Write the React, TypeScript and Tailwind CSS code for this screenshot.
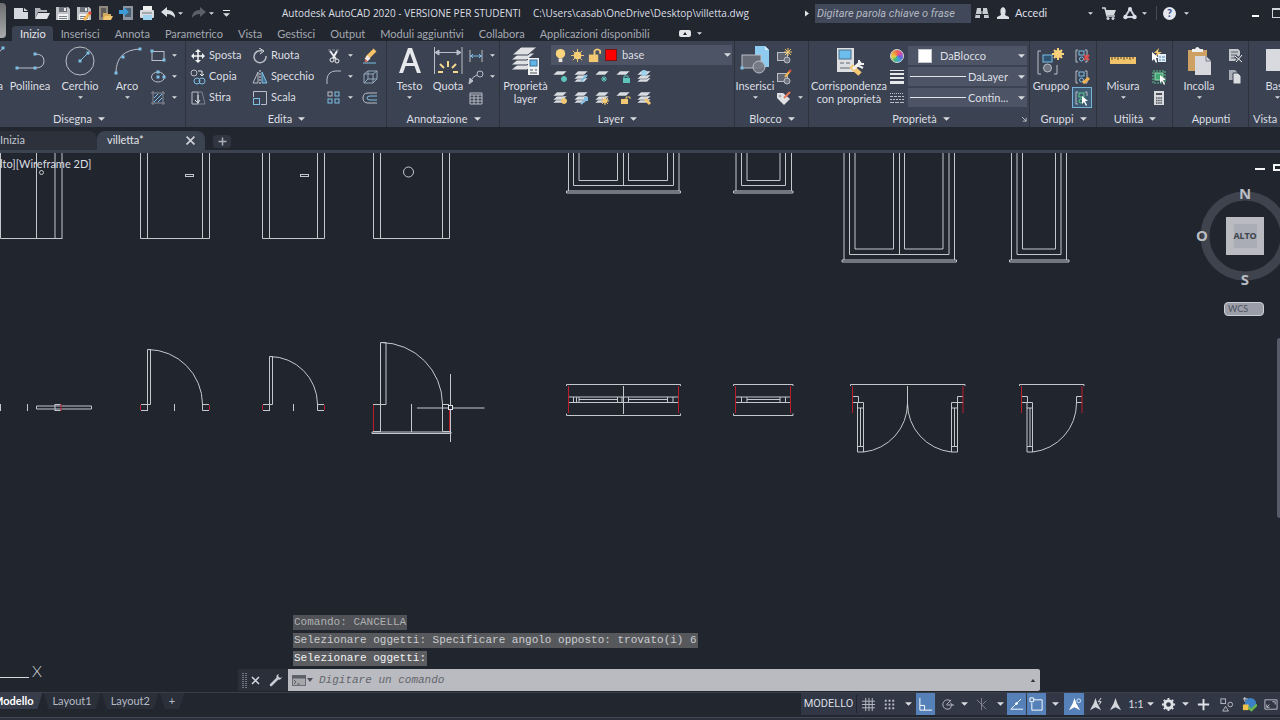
import type { ReactNode } from "react";
import clsx from "clsx";

type IconProps = { size?: string; box?: string; children: ReactNode };

const LINE = "#b9bec8";
const BLUE = "#7fbfe6";
const PAPER = "#d5d8dc";
const GOLD = "#f3c872";
const TEAL = "#5cc4bb";

function Icon({ size = "h-4 w-4", box = "0 0 16 16", children }: IconProps) {
  return (
    <svg viewBox={box} className={clsx("shrink-0", size)} fill="none" stroke={LINE} strokeWidth="1" aria-hidden="true">
      {children}
    </svg>
  );
}

function Caret({ small = false }: { small?: boolean }) {
  return (
    <svg viewBox="0 0 8 4" className={small ? "h-[3px] w-[5px] shrink-0" : "h-1 w-[7px] shrink-0"} aria-hidden="true">
      <path d="M0 0H8L4 4Z" fill="#d9dce1" />
    </svg>
  );
}

/* ---------- quick access icons ---------- */

const floppy = (
  <g stroke="none">
    <path d="M1 2H13L15 4V15H1Z" fill="#bfc2c7" />
    <rect x="4" y="2" width="8" height="5" fill="#6d7179" />
    <rect x="9" y="3" width="2" height="3" fill="#e6e8ea" />
    <rect x="3" y="9" width="10" height="6" fill="#f1f1f1" />
    <path d="M4 11.5H12M4 13.5H12" stroke="#7b7f86" />
  </g>
);

const quickIcons: { name: string; icon: ReactNode }[] = [
  { name: "Nuovo", icon: <path d="M1 3H10V7H15V14H1Z M11 3L15 6H11Z" fill={PAPER} stroke="none" /> },
  {
    name: "Apri",
    icon: (
      <g stroke="none">
        <path d="M1 14V3H6L7 5H13V7H4Z" fill="#aeb2b8" />
        <path d="M4 8H16L13 14H1Z" fill="#dfe1e4" />
      </g>
    ),
  },
  { name: "Salva", icon: floppy },
  {
    name: "Salva con nome",
    icon: (
      <>
        {floppy}
        <path d="M8 15L14 8" stroke="#f0b352" strokeWidth="3" />
        <path d="M13 9L15 7" stroke="#d9483c" strokeWidth="3" />
      </>
    ),
  },
  {
    name: "Apri da Web",
    icon: (
      <g stroke="none">
        <rect x="2" y="1" width="9" height="14" fill="#8f8a80" />
        <rect x="4" y="3" width="5" height="9" fill="#5e5c59" />
        <path d="M6 15V8H10L11 9H14V15Z" fill="#d8ab5c" />
        <path d="M8 11H16L14 15H6Z" fill={GOLD} />
      </g>
    ),
  },
  {
    name: "Salva su Web",
    icon: (
      <g stroke="none">
        <rect x="5" y="1" width="10" height="14" fill="#8f959e" />
        <rect x="7" y="3" width="6" height="9" fill="#4a6075" />
        <path d="M1 5H6V2L11 7L6 11V9H1Z" fill="#3d9ad8" />
      </g>
    ),
  },
  {
    name: "Stampa",
    icon: (
      <g stroke="none">
        <rect x="4" y="1" width="9" height="5" fill="#f0f0f0" />
        <rect x="1" y="5" width="14" height="8" rx="1" fill="#d9dbde" />
        <path d="M3 8H13" stroke="#6d7078" />
        <rect x="4" y="10" width="9" height="5" fill="#9fd2ee" />
      </g>
    ),
  },
];

function QuickAccess() {
  return (
    <div className="flex items-center gap-[5px] pl-[13px]">
      {quickIcons.map((item) => (
        <button key={item.name} aria-label={item.name}>
          <Icon>{item.icon}</Icon>
        </button>
      ))}
      <button aria-label="Annulla">
        <Icon>
          <path d="M1 7L7 2V5Q15 5 15 13Q12 9 7 9V12Z" fill="#dcdfe3" stroke="none" />
        </Icon>
      </button>
      <button aria-label="Elenco annulla" className="-ml-[3px] w-2">
        <Caret small />
      </button>
      <button aria-label="Ripeti">
        <Icon>
          <path d="M15 7L9 2V5Q1 5 1 13Q4 9 9 9V12Z" fill="#5a6069" stroke="none" />
        </Icon>
      </button>
      <button aria-label="Elenco ripeti" className="-ml-[3px] w-2">
        <Caret small />
      </button>
      <button aria-label="Personalizza" className="flex w-2 flex-col items-center gap-[2px]">
        <span className="h-px w-[7px] bg-gray-200" />
        <Caret />
      </button>
    </div>
  );
}

function TitleBar() {
  return (
    <header className="flex h-[26px] shrink-0 items-center bg-[#22262f] text-[11px] text-[#dcdfe4]">
      <QuickAccess />
      <div className="ml-[52px] flex gap-3 whitespace-nowrap font-['Open_Sans',sans-serif] text-[10px]">
        <h1>Autodesk AutoCAD 2020 - VERSIONE PER STUDENTI</h1>
        <span>C:\Users\casab\OneDrive\Desktop\villetta.dwg</span>
      </div>
      <div className="ml-auto flex shrink-0 items-center">
        <svg viewBox="0 0 4 6" className="mr-[6px] h-[7px] w-1" aria-hidden="true">
          <path d="M0 0L4 3L0 6Z" fill="#e5e7eb" />
        </svg>
        <input
          aria-label="Cerca"
          placeholder="Digitare parola chiave o frase"
          className="h-[19px] w-[156px] bg-[#414859] px-[2px] font-[Roboto,sans-serif] italic placeholder:text-[#b3b8c2]"
        />
        <button aria-label="Trova" className="ml-[3px]">
          <Icon>
            <path d="M3 3H7V6H9V3H13L15 13H10V9H6V13H1Z" fill="#c8ccd2" stroke="none" />
            <path d="M2 9.500H6M10 9.500H14M8 3V9" stroke="#22262f" />
          </Icon>
        </button>
        <button className="ml-[5px] flex w-[98px] items-center gap-1">
          <Icon>
            <path d="M2 14V12L6 10Q4 3 8 2Q12 3 10 10L14 12V14Z" fill="#dcdfe3" stroke="none" />
          </Icon>
          Accedi
          <span className="ml-auto">
            <Caret small />
          </span>
        </button>
        <button aria-label="App Store" className="ml-2">
          <Icon>
            <path d="M1 3H4L6 11H14" stroke="#d5d8dd" strokeWidth="1.500" />
            <path d="M4 5H15L13 10H6Z" fill="#d5d8dd" stroke="none" />
            <circle cx="7" cy="13.500" r="1.200" fill="#d5d8dd" />
            <circle cx="12" cy="13.500" r="1.200" fill="#d5d8dd" />
          </Icon>
        </button>
        <button aria-label="Autodesk App" className="ml-[5px] flex items-center gap-1">
          <Icon>
            <path d="M8 4L3 12H13Z" stroke="#c7ccda" strokeWidth="2" />
            <g fill="#dde1ec" stroke="none">
              <circle cx="8" cy="4" r="2" />
              <circle cx="3.500" cy="12" r="2.200" />
              <circle cx="12.500" cy="12" r="2.200" />
            </g>
          </Icon>
          <Caret small />
        </button>
        <span className="ml-[9px] h-[14px] w-px bg-[#454b57]" />
        <button aria-label="Guida" className="ml-[6px] flex items-center gap-2">
          <span className="flex h-[13px] w-[13px] items-center justify-center rounded-full bg-[#e6e8ef] text-[11px] font-bold text-[#2d4a8c]">
            ?
          </span>
          <Caret small />
        </button>
        <button aria-label="Riduci a icona" className="ml-[63px] h-[8px] w-[7px] border-b-2 border-white" />
        <button aria-label="Ingrandisci" className="-mr-1 ml-[13px] h-[10px] w-3 border border-t-2 border-gray-300" />
      </div>
    </header>
  );
}

/* ---------- ribbon ---------- */

const ribbonTabs = [
  "Inizio",
  "Inserisci",
  "Annota",
  "Parametrico",
  "Vista",
  "Gestisci",
  "Output",
  "Moduli aggiuntivi",
  "Collabora",
  "Applicazioni disponibili",
];

function RibbonTabs() {
  return (
    <nav className="flex h-[15px] shrink-0 items-stretch bg-[#22262f] pl-3 text-[11px] leading-[15px] text-[#a4a9b2]">
      {ribbonTabs.map((tab) => (
        <button
          key={tab}
          className={clsx("whitespace-nowrap rounded-t-sm pl-2 pr-[7px]", tab === "Inizio" && "bg-[#3b4251] text-[#e4e7eb]")}
        >
          {tab}
        </button>
      ))}
      <button aria-label="Riduci barra multifunzione" className="ml-[22px] flex items-center gap-[6px]">
        <span className="flex h-[7px] w-3 items-center justify-center rounded-[2px] bg-[#e3e5e8]">
          <svg viewBox="0 0 4 3" className="h-[3px] w-1">
            <path d="M0 3H4L2 0Z" fill="#22262f" />
          </svg>
        </span>
        <Caret small />
      </button>
    </nav>
  );
}

type PanelProps = { title: string; width: string; caret?: boolean; launcher?: boolean; children: ReactNode };

function Panel({ title, width, caret = true, launcher = false, children }: PanelProps) {
  return (
    <section className={clsx("flex shrink-0 flex-col border-r border-[#2d323d]", width)}>
      <div className="flex h-[70px] pt-1">{children}</div>
      <button className="flex h-4 items-center justify-center gap-[6px] pl-px text-[11px] leading-4">
        {title}
        {caret && <Caret />}
        {launcher && (
          <svg viewBox="0 0 6 6" className="-mr-[80px] ml-[66px] h-[5px] w-[5px]" stroke="#c9cdd4">
            <path d="M0 0L5 5M5 1V5H1" fill="none" />
          </svg>
        )}
      </button>
    </section>
  );
}

type LargeProps = { label: string; width: string; caret?: boolean; children: ReactNode };

function LargeTool({ label, width, caret = false, children }: LargeProps) {
  return (
    <button className={clsx("flex shrink-0 flex-col items-center text-[11px] leading-[13px]", width)}>
      <Icon size="h-8 w-8" box="0 0 32 32">
        {children}
      </Icon>
      <span className="mt-[2px] whitespace-pre-line text-center">{label}</span>
      {caret && (
        <span className="mt-1">
          <Caret small />
        </span>
      )}
    </button>
  );
}

type SmallProps = { name: string; icon: ReactNode; caret?: boolean; active?: boolean };

function SmallTool({ name, icon, caret = false, active = false }: SmallProps) {
  return (
    <button
      aria-label={name}
      className={clsx(
        "flex h-[21px] items-center gap-[6px] px-[2px]",
        active && "bg-[#3f5a73] outline outline-1 -outline-offset-1 outline-[#78b4d8]",
      )}
    >
      <Icon>{icon}</Icon>
      {caret && <Caret small />}
    </button>
  );
}

function TextTool({ label, icon }: { label: string; icon: ReactNode }) {
  return (
    <button className="flex h-[21px] items-center gap-[3px] text-[11px]">
      <Icon>{icon}</Icon>
      {label}
    </button>
  );
}

const dot = (x: number, y: number) => <rect x={x - 1} y={y - 1} width="2" height="2" fill={BLUE} stroke={BLUE} />;

function DrawPanel() {
  return (
    <div className="-ml-7 flex shrink-0">
      <Panel title="Disegna" width="w-[214px]">
        <LargeTool label="Linea" width="w-9">
          <path d="M6 28L29 3" />
          {dot(29, 3)}
        </LargeTool>
        <LargeTool label="Polilinea" width="w-11">
          <path d="M3 23H21Q30 23 30 16Q30 9 21 9" />
          {dot(3, 23)}
          {dot(21, 23)}
          {dot(21, 9)}
        </LargeTool>
        <LargeTool label="Cerchio" width="w-14" caret>
          <circle cx="16" cy="16" r="14" />
          <path d="M16 16L24 8" stroke={BLUE} />
          {dot(16, 16)}
          {dot(24, 8)}
        </LargeTool>
        <LargeTool label="Arco" width="w-[38px]" caret>
          <path d="M5 28Q5 5 29 4" />
          {dot(5, 28)}
          {dot(12, 12)}
          {dot(29, 4)}
        </LargeTool>
        <div className="ml-[2px] flex flex-col">
          <SmallTool
            name="Rettangolo"
            caret
            icon={
              <>
                <rect x="2" y="3.500" width="12" height="9" />
                {dot(2, 3)}
                {dot(14, 12)}
              </>
            }
          />
          <SmallTool
            name="Ellisse"
            caret
            icon={
              <>
                <ellipse cx="8" cy="8" rx="6.500" ry="5" />
                {dot(8, 8)}
                {dot(8, 3)}
                {dot(14, 8)}
              </>
            }
          />
          <SmallTool
            name="Tratteggio"
            caret
            icon={
              <>
                <path d="M3 1V15M13 1V15M1 3H15M1 13H15" stroke="#858c99" />
                <path d="M4 8L8 4M4 12L12 4M8 12L12 8" stroke={BLUE} />
              </>
            }
          />
        </div>
      </Panel>
    </div>
  );
}

function EditPanel() {
  return (
    <Panel title="Edita" width="w-[201px]">
      <div className="ml-1 flex w-[62px] flex-col">
        <TextTool
          label="Sposta"
          icon={
            <>
              <path d="M8 3V13M3 8H13" stroke="#f2f3f5" strokeWidth="1.500" />
              <path d="M8 1L11 4H5ZM8 15L5 12H11ZM1 8L4 5V11ZM15 8L12 11V5Z" fill="#f2f3f5" stroke="none" />
            </>
          }
        />
        <TextTool
          label="Copia"
          icon={
            <>
              <circle cx="4" cy="4" r="3" />
              <path d="M8 2H12V6M10 5L12 7L14 5" stroke="#e4e6ea" />
              <circle cx="7" cy="12" r="3" stroke={BLUE} />
              <circle cx="12" cy="12" r="3" stroke={BLUE} />
            </>
          }
        />
        <TextTool
          label="Stira"
          icon={
            <>
              <path d="M2 2H8V14H2Z" />
              <path d="M8 2H12L15 14H8" stroke="#7b8493" />
              <path d="M8 5V13M5 10L8 13L10 10" stroke="#dfe2e7" />
            </>
          }
        />
      </div>
      <div className="flex w-[74px] flex-col">
        <TextTool
          label="Ruota"
          icon={
            <>
              <path d="M10 3A6 6 0 1 0 14 8" strokeWidth="1.500" />
              <path d="M7 0L12 3L8 6" stroke="#e4e6ea" />
            </>
          }
        />
        <TextTool
          label="Specchio"
          icon={
            <>
              <path d="M6 3V14H1Z" />
              <path d="M10 3V14H15Z" stroke={BLUE} fill="#46708d" />
              <path d="M8 1V15" stroke="#dfe2e7" strokeDasharray="2 1" />
            </>
          }
        />
        <TextTool
          label="Scala"
          icon={
            <>
              <path d="M1.500 7V1.500H14.500V14.500H9" />
              <rect x="1.500" y="8.500" width="6" height="6" stroke={BLUE} />
            </>
          }
        />
      </div>
      <div className="-ml-[2px] flex w-9 flex-col">
        <SmallTool
          name="Taglia"
          caret
          icon={
            <>
              <path d="M2 2H14" stroke="#868d99" strokeDasharray="3 1" />
              <path d="M4 3L10 11M11 3L7 10" stroke="#eceef0" strokeWidth="2" />
              <circle cx="11" cy="13" r="2" stroke="#eceef0" />
              <circle cx="6" cy="12" r="2" stroke="#eceef0" />
            </>
          }
        />
        <SmallTool name="Raccordo" caret icon={<path d="M1 15V10Q2 2 10 2H15" stroke={LINE} />} />
        <SmallTool
          name="Serie"
          caret
          icon={
            <>
              <rect x="2" y="2" width="4" height="4" />
              <rect x="9" y="2" width="4" height="4" stroke={BLUE} />
              <rect x="2" y="9" width="4" height="4" stroke={BLUE} />
              <rect x="9" y="9" width="4" height="4" stroke={BLUE} />
            </>
          }
        />
      </div>
      <div className="flex flex-col">
        <SmallTool
          name="Cancella"
          icon={
            <>
              <path d="M5 10L13 2" stroke="#f5c267" strokeWidth="4" />
              <path d="M4 12L7 9" stroke="#ece9e6" strokeWidth="4" />
              <path d="M3 12L5 14" stroke="#d9604f" strokeWidth="2" />
              <path d="M1 15H14" stroke={BLUE} />
            </>
          }
        />
        <SmallTool
          name="Esplodi"
          icon={<path d="M2 5H11V14H2ZM2 5L6 2H15V10L11 14M11 5L15 2M6 2V10H15M6 10L2 14" stroke="#93a9bd" />}
        />
        <SmallTool
          name="Offset"
          icon={
            <>
              <path d="M15 3H6Q1 3 1 8Q1 13 6 13H15" />
              <path d="M15 6H8Q5 6 5 8Q5 10 8 10H15" stroke={BLUE} />
            </>
          }
        />
      </div>
    </Panel>
  );
}

function AnnotationPanel() {
  return (
    <Panel title="Annotazione" width="w-[113px]">
      <LargeTool label="Testo" width="w-[45px]" caret>
        <path d="M5 28L14 3H18L27 28H23L20.500 21H11.500L9 28ZM12.500 18H19.500L16 8Z" fill="#e6e8eb" stroke="none" />
      </LargeTool>
      <LargeTool label="Quota" width="w-8">
        <path d="M2.500 2V29M30 2V29M3 7.500H29" />
        <path d="M3 7.500L7 5V10ZM29 7.500L25 5V10Z" fill={LINE} />
        <path d="M6 27H11M21 27H26M8 19L12 23M24 19L20 23M16 16V22" stroke="#f6d78c" strokeWidth="2" />
      </LargeTool>
      <div className="ml-[2px] flex flex-col">
        <SmallTool
          name="Quota lineare"
          caret
          icon={
            <>
              <path d="M2 2V14M14 2V14" />
              <path d="M2 8H14M5 6L3 8L5 10M11 6L13 8L11 10" stroke={BLUE} />
            </>
          }
        />
        <SmallTool
          name="Direttrice"
          caret
          icon={
            <>
              <circle cx="12" cy="5" r="3" />
              <path d="M9 6Q5 7 2 13" />
              <path d="M1 15L2 9L5 12Z" fill={LINE} />
            </>
          }
        />
        <SmallTool name="Tabella" icon={<path d="M2 3H14V14H2ZM2 5H14M2 8H14M2 11H14M6 5V14M10 5V14" />} />
      </div>
    </Panel>
  );
}

const sheet = (y: number) => <path d={`M5 ${y}H15L11 ${y + 4}H1Z`} fill="#d9dce0" stroke="#3b4251" strokeWidth="0.5" />;

const layerTools: { name: string; stack: boolean; mark: ReactNode }[] = [
  { name: "Disattiva", stack: false, mark: <circle cx="12" cy="10" r="2.500" fill={TEAL} stroke={TEAL} /> },
  { name: "Isola", stack: true, mark: <path d="M8 12L14 6" stroke={BLUE} strokeWidth="2" /> },
  { name: "Congela", stack: false, mark: <path d="M10 7V13M7 10H13M8 8L12 12M12 8L8 12" stroke={TEAL} /> },
  {
    name: "Blocca",
    stack: false,
    mark: (
      <>
        <path d="M9 10V7H13V10" stroke={TEAL} />
        <rect x="8" y="9" width="7" height="5" fill={TEAL} stroke="none" />
      </>
    ),
  },
  { name: "Rendi corrente", stack: true, mark: <circle cx="8" cy="4" r="3" fill="#9ed2ef" stroke="none" /> },
  { name: "Attiva tutti", stack: true, mark: <circle cx="12" cy="11" r="2.500" fill={GOLD} stroke={GOLD} /> },
  { name: "Annulla isolamento", stack: true, mark: <path d="M8 14L14 8M11 8H14V11" stroke={BLUE} strokeWidth="2" /> },
  {
    name: "Scongela tutti",
    stack: true,
    mark: (
      <>
        <circle cx="11" cy="11" r="2" fill={GOLD} stroke={GOLD} />
        <path d="M11 7V15M7 11H15M8 8L14 14M14 8L8 14" stroke={GOLD} />
      </>
    ),
  },
  {
    name: "Sblocca",
    stack: false,
    mark: (
      <>
        <path d="M11 10V7H15V9" stroke={GOLD} />
        <rect x="6" y="9" width="7" height="5" fill={GOLD} stroke="none" />
      </>
    ),
  },
  { name: "Corrispondenza layer", stack: true, mark: <path d="M9 9L14 14" stroke={GOLD} strokeWidth="3" /> },
];

function LayerPanel() {
  return (
    <Panel title="Layer" width="w-[235px]">
      <LargeTool label={"Proprietà\nlayer"} width="w-[51px]">
        <g fill="#dfe1e4" stroke="#3b4251">
          <path d="M9 18H25L17 25H1Z" />
          <path d="M9 13H25L17 20H1Z" />
          <path d="M9 8H25L17 15H1Z" />
          <path d="M11 2H27L18 10H2Z" />
        </g>
        <rect x="18" y="13" width="11" height="17" fill="#f0f1f2" stroke="none" />
        <rect x="20" y="15" width="7" height="6" fill="#61b5e8" stroke="#3f6f93" />
        <path d="M20 25H23M25 25H27M20 28H27" stroke="#4c525c" />
      </LargeTool>
      <div className="flex flex-1 flex-col">
        <div className="mr-[2px] flex h-5 items-center gap-[2px] bg-[#4d5465] pl-[2px] pr-px">
          <Icon size="h-[15px] w-[15px]">
            <circle cx="8" cy="6" r="5" fill="#f8d57d" stroke="none" />
            <rect x="6" y="11" width="4" height="4" fill="#e8e3d6" stroke="none" />
          </Icon>
          <Icon size="h-[15px] w-[15px]">
            <circle cx="8" cy="8" r="4" fill="#f8d57d" stroke="none" />
            <path d="M8 1V15M1 8H15M3 3L13 13M13 3L3 13" stroke={GOLD} />
          </Icon>
          <Icon size="h-[15px] w-[15px]">
            <path d="M8 8V3Q11 0 14 3V6" stroke={GOLD} strokeWidth="2" />
            <rect x="2" y="7" width="10" height="8" fill={GOLD} stroke="none" />
          </Icon>
          <span className="ml-px h-3 w-3 border border-[#7b1414] bg-[#fd0000]" />
          <select aria-label="Layer corrente" className="ml-[3px] flex-1 appearance-none text-[11px] leading-4">
            <option>base</option>
          </select>
          <Caret />
        </div>
        <div className="grid grid-cols-5 self-start pt-px">
          {layerTools.map((tool) => (
            <button key={tool.name} aria-label={tool.name} className="flex h-[21px] w-[21px] items-center pl-px">
              <Icon>
                {tool.stack && sheet(9)}
                {tool.stack && sheet(6)}
                {sheet(2)}
                {tool.mark}
              </Icon>
            </button>
          ))}
        </div>
      </div>
    </Panel>
  );
}

const blockGlyph = (
  <>
    <rect x="1.500" y="4.500" width="10" height="8" fill="#60656f" />
    <circle cx="11" cy="12" r="3" fill="#70757f" />
  </>
);

function BlockPanel() {
  return (
    <Panel title="Blocco" width="w-[74px]">
      <LargeTool label="Inserisci" width="w-10" caret>
        <path d="M16 1H26L30 5V22H16Z" fill="#8fcaf0" stroke="none" />
        <path d="M26 1V5H30Z" fill="#d6ecfa" stroke="none" />
        <rect x="3" y="10" width="19" height="13" fill="#686c76" />
        <circle cx="20" cy="22" r="6" fill="#787c86" fillOpacity="0.9" />
        {dot(3, 23)}
      </LargeTool>
      <div className="-ml-px flex flex-col">
        <SmallTool
          name="Crea blocco"
          icon={
            <>
              {blockGlyph}
              <path d="M12 0V8M8 4H16M9 1L15 7M15 1L9 7" stroke={GOLD} />
            </>
          }
        />
        <SmallTool
          name="Modifica blocco"
          icon={
            <>
              {blockGlyph}
              <path d="M9 8L14 2" stroke="#f0b352" strokeWidth="2" />
              <path d="M13 3L15 1" stroke="#e0523f" strokeWidth="2" />
            </>
          }
        />
        <SmallTool
          name="Modifica attributi"
          caret
          icon={
            <>
              <path d="M1 3H7L14 9L8 15L1 8Z" fill="#dfe1e5" stroke="none" />
              <circle cx="4" cy="6" r="1" fill="#3b4251" />
              <path d="M8 8L14 2" stroke="#e97957" strokeWidth="2" />
            </>
          }
        />
      </div>
    </Panel>
  );
}

type ComboProps = { label: string; value: string; line?: string; swatch?: boolean };

function Combo({ label, value, line, swatch = false }: ComboProps) {
  return (
    <div className="mb-[2px] flex h-[19px] items-center bg-[#4d5465] pl-[2px] pr-[2px]">
      {swatch && <span className="ml-2 mr-2 h-[14px] w-[14px] border border-[#c5c8ce] bg-white" />}
      {line && <span className={clsx("mr-[2px] h-px bg-[#e1e4e8]", line)} />}
      <select aria-label={label} className="min-w-0 flex-1 appearance-none text-[11px] leading-4">
        <option>{value}</option>
      </select>
      <Caret />
    </div>
  );
}

function PropertiesPanel() {
  return (
    <Panel title="Proprietà" width="w-[221px]" launcher>
      <LargeTool label={"Corrispondenza\ncon proprietà"} width="w-20">
        <rect x="4" y="3" width="17" height="24" fill="#dddfe2" stroke="none" />
        <rect x="6" y="5" width="12" height="9" fill="#6cbcec" stroke="#4b6f8a" />
        <path d="M7 18H11M13 18H17M7 23H17" stroke="#626873" />
        <path d="M18 21L27 29" stroke={GOLD} strokeWidth="5" />
        <path d="M20 24L28 17" stroke="#f0f0f0" strokeWidth="3" />
        <path d="M24 20L30 23M26 15V19H31" stroke="#f0f0f0" strokeWidth="2" />
      </LargeTool>
      <div className="ml-px flex flex-col">
        <button aria-label="Colore oggetto" className="flex h-[21px] w-[18px] items-center">
          <span className="h-[14px] w-[14px] rounded-full border border-gray-300 bg-[conic-gradient(#f26a4b,#d94fa0,#6d62d8,#3fa3e0,#45b877,#e6d24c,#f0a03c,#f26a4b)]" />
        </button>
        <button aria-label="Spessore linea" className="flex h-[21px] w-[18px] flex-col justify-center gap-[2px]">
          <span className="h-px w-[14px] bg-gray-200" />
          <span className="h-[2px] w-[14px] bg-gray-200" />
          <span className="h-[2px] w-[14px] bg-gray-200" />
          <span className="h-[3px] w-[14px] bg-gray-200" />
        </button>
        <button aria-label="Tipo di linea" className="flex h-[21px] w-[18px] items-center">
          <Icon size="h-[14px] w-[14px]" box="0 0 14 14">
            <path d="M0 2.500H14" strokeDasharray="1 1" />
            <path d="M0 5.500H14" strokeDasharray="3 1" />
            <path d="M0 8.500H14" strokeDasharray="2 1" />
            <path d="M0 11.500H14" strokeDasharray="4 1" />
          </Icon>
        </button>
      </div>
      <div className="mr-[2px] flex min-w-0 flex-1 flex-col pt-px">
        <Combo label="Colore" value="DaBlocco" swatch />
        <Combo label="Spessore" value="DaLayer" line="w-[56px]" />
        <Combo label="Tipo linea" value="Contin..." line="w-[56px]" />
      </div>
    </Panel>
  );
}

const groupGlyph = (
  <>
    <path d="M4 2H2V14H4M11 2H13V14H11" />
    <rect x="5" y="3" width="5" height="4" stroke={BLUE} />
    <circle cx="7.500" cy="11" r="2" stroke={BLUE} />
  </>
);

function GroupPanel() {
  return (
    <Panel title="Gruppi" width="w-[67px]">
      <LargeTool label="Gruppo" width="w-[42px]">
        <path d="M6 6H3V29H6M19 29H22V20" />
        <rect x="8" y="10" width="9" height="7" fill="#2f5573" stroke={BLUE} />
        <circle cx="12.500" cy="23" r="4" fill="#6f747f" />
        <path d="M23 3V15M17 9H29M19 5L27 13M27 5L19 13" stroke="#f8d17a" strokeWidth="2" />
        <circle cx="23" cy="9" r="4" fill="#f8d17a" stroke="none" />
      </LargeTool>
      <div className="flex flex-col">
        <SmallTool
          name="Separa"
          icon={
            <>
              {groupGlyph}
              <path d="M10 7L15 12M15 7L10 12" stroke="#e14b4b" strokeWidth="2" />
            </>
          }
        />
        <SmallTool
          name="Modifica gruppo"
          icon={
            <>
              {groupGlyph}
              <path d="M9 14L15 9" stroke="#f0b352" strokeWidth="3" />
            </>
          }
        />
        <SmallTool
          name="Selezione gruppi"
          active
          icon={
            <>
              <path d="M4 2H2V14H4M11 2H13V6" />
              <rect x="5" y="3" width="5" height="4" stroke="#5fd08e" />
              <circle cx="7" cy="11" r="2" stroke="#5fd08e" />
              <path d="M8 6V14L10 12L12 16L13 15L11 11H14Z" fill="white" stroke="none" />
            </>
          }
        />
      </div>
    </Panel>
  );
}

function UtilityPanel() {
  return (
    <Panel title="Utilità" width="w-[76px]">
      <LargeTool label="Misura" width="w-[52px]" caret>
        <rect x="3" y="12" width="26" height="7" fill="#f1c46b" stroke="none" />
        <path d="M5 12V15M8 12V14M11 12V15M14 12V14M17 12V15M20 12V14M23 12V15M26 12V14" stroke="#5d4a25" />
      </LargeTool>
      <div className="flex flex-col">
        <SmallTool
          name="Selezione rapida"
          icon={
            <>
              <path d="M8 0L3 5H6L4 9L11 4H7Z" fill={GOLD} stroke="none" />
              <path d="M1 4V13L3 11L5 15L6 14L5 10H8Z" fill="white" stroke="none" />
              <rect x="7" y="6" width="8" height="8" fill="#e6eef5" stroke="none" />
              <path d="M8 9H10M11 9H14M8 12H10M11 12H14" stroke="#4888b5" />
            </>
          }
        />
        <SmallTool
          name="Seleziona tutto"
          icon={
            <>
              <rect x="2" y="2" width="12" height="12" stroke="#58c78a" strokeDasharray="2 1" />
              <rect x="4" y="4" width="8" height="7" fill="#45a673" stroke="#8fe0b3" />
              <path d="M9 6V14L11 12L13 16L14 15L12 11H15Z" fill="white" stroke="none" />
            </>
          }
        />
        <SmallTool
          name="Calcolatrice"
          icon={
            <>
              <rect x="3" y="1" width="10" height="14" fill="#d8dadd" stroke="none" />
              <path d="M5 4H11" stroke="#4d525c" strokeWidth="2" />
              <path d="M5 8H11M5 10.500H11M5 13H11" stroke="#4d525c" strokeWidth="1.500" strokeDasharray="1.500 .7" />
            </>
          }
        />
      </div>
    </Panel>
  );
}

function ClipboardPanel() {
  return (
    <Panel title="Appunti" width="w-[76px]" caret={false}>
      <LargeTool label="Incolla" width="w-[52px]" caret>
        <rect x="5" y="5" width="19" height="21" fill="#cda163" stroke="none" />
        <path d="M9 7V4H12Q14 0 17 4H20V7Z" fill="#eceef0" stroke="none" />
        <path d="M12 11H23L28 16V30H12Z" fill="#d6d8dd" stroke="none" />
        <path d="M23 11V16H28" stroke="#787d87" />
      </LargeTool>
      <div className="flex flex-col">
        <SmallTool
          name="Taglia negli appunti"
          icon={
            <>
              <path d="M2 1H11L13 3V13H2Z" fill="#c3c6cc" stroke="none" />
              <path d="M4 4H11M4 7H10M4 10H8" stroke="#5b606b" />
              <path d="M8 8L15 14M15 7L9 14" stroke="#3b4251" strokeWidth="3" />
              <path d="M8 8L15 14M15 7L9 14" stroke="#f4f4f5" />
            </>
          }
        />
        <SmallTool
          name="Copia negli appunti"
          icon={
            <>
              <path d="M2 1H8L10 3V11H2Z" fill="#a9adb5" stroke="none" />
              <path d="M6 4H11L14 7V15H6Z" fill="#dadce0" stroke="#3b4251" />
            </>
          }
        />
      </div>
    </Panel>
  );
}

function ViewPanel() {
  return (
    <section className="flex min-w-0 flex-1 flex-col overflow-hidden">
      <div className="flex h-[70px] pl-1 pt-1">
        <LargeTool label="Base" width="w-12" caret>
          <path d="M5 4H19V15H31V26H5Z" fill="#d8dadf" stroke="none" />
        </LargeTool>
      </div>
      <button className="h-4 pl-1 text-left text-[11px] leading-4">Vista</button>
    </section>
  );
}

function FileTabs() {
  return (
    <div className="shrink-0 border-b-[3px] border-[#3b4250] bg-[#22262f] pt-1 text-[11px] text-[#c3c7ce]">
      <div className="flex h-[19px] items-stretch">
        <button className="w-[97px] rounded-tr-lg bg-[#2c313c] text-left">Inizia</button>
        <div className="flex w-[108px] items-center justify-between rounded-t-lg bg-[#3b4250] pl-[10px] pr-[10px] text-[#e2e5e9]">
          <button>villetta*</button>
          <button aria-label="Chiudi villetta">
            <Icon size="h-[9px] w-[9px]" box="0 0 8 8">
              <path d="M0.500 0.500L7.500 7.500M7.500 0.500L0.500 7.500" stroke="#cdd1d7" strokeWidth="1.500" />
            </Icon>
          </button>
        </div>
        <button aria-label="Nuovo disegno" className="ml-2 mt-1 flex h-[13px] w-[18px] items-center justify-center rounded-sm bg-[#303641]">
          <Icon size="h-[9px] w-[9px]" box="0 0 9 9">
            <path d="M4.500 0.500V8.500M0.500 4.500H8.500" stroke="#a9aeb7" strokeWidth="1.500" />
          </Icon>
        </button>
      </div>
    </div>
  );
}

/* ---------- drawing ---------- */

function Drawing() {
  return (
    <svg className="absolute inset-0 h-full w-full" fill="none" stroke="#c4c8ce" strokeWidth="1" aria-label="villetta">
      <g transform="translate(0 -153)">
        {/* door elevations */}
        <path d="M0.500 150V238.500H62M36.500 150V238M55 150V238M62 150V239" />
        <circle cx="41.500" cy="172.500" r="2" />
        <path d="M140.500 150V238.500H209.500V150M147.500 150V238M202.500 150V238" />
        <rect x="185.500" y="174.500" width="8" height="2" />
        <path d="M262.500 150V238.500H324.500V150M269.500 150V238M317.500 150V238" />
        <rect x="300.500" y="174.500" width="8" height="2" />
        <path d="M373.500 150V238.500H449.500V150M380.500 150V238M442.500 150V238" />
        <circle cx="408.500" cy="172" r="5" />

        {/* window elevations */}
        <path d="M568.500 150V191M679 150V191M573.500 150V185.500H673.500V150M623.500 150V185.500" />
        <path d="M579 150V180.500H617.500V150M628.500 150V180.500H667.500V150M566.500 191H680.500V193H566.500Z" />
        <path d="M736 150V191M791.500 150V191M741.500 150V185.500H785.500V150M747 150V180.500H780V150" />
        <path d="M733.500 191H793V193H733.500Z" />
        <path d="M844 150V260M954.500 150V260M849.500 150V254.500H949V150M899.500 150V254.500" />
        <path d="M855 150V249H893.500V150M904.500 150V249H943V150M842 260H956.500V262H842Z" />
        <path d="M1011.500 150V260M1066.500 150V260M1017 150V254.500H1061V150M1022.500 150V249H1055.500V150" />
        <path d="M1009.500 260H1069V262H1009.500Z" />

        {/* door plans */}
        <path d="M0.500 404V411M27.500 404V411M36.500 406H91.500V409H36.500ZM55 404.500H61M55 410.500H61M55 404V411" />
        <path d="M147.500 411V349.500H150.500V404.500H141M141 410.500H147.500M148 349.500A55 55 0 0 1 202.500 404V410.500H209M202.500 404.500H209M174.500 404V411" />
        <path d="M269.500 411V356.500H272.500V404.500H263M263 410.500H269.500M270 356.500A48 48 0 0 1 317.500 404V410.500H324M317.500 404.500H324M293.500 404V411" />
        <path d="M380.500 432V342.500H386V404.500H373M381 342.500A62 62 0 0 1 442.500 404V431.500M442.500 404.500H449M442.500 431.500H451M411.500 404V432" />
        <path d="M372 432H451V433.500H372ZM373 431.500H381" />

        {/* window plans */}
        <path d="M566.500 386V384.500H680.500V386M566.500 413.500V415.500H680.500V413.500M568 397H679M568 402.500H679" />
        <path d="M573.500 397V402M576.500 397V402M579 397V402M617.500 397V402M622 397V402M628.500 397V402M667.500 397V402M673 397V402M579 399.500H617M628 399.500H667M623.500 386V414" />
        <path d="M733.500 386V384.500H793V386M733.500 413.500V415.500H793V413.500M735 397H791M735 402.500H791M741.500 397V402M747 397V402M780 397V402M785.500 397V402M747 399.500H780" />
        <path d="M850.500 386V384.500H965V386M852 396.500H858.500V402M852 402.500H863.500V452H857.500V402M857.500 408H863.500M857.500 446.500H863.500M860.500 408V446M907.500 386V408" />
        <path d="M863.500 452A49 49 0 0 0 907.500 403A49 49 0 0 0 951.500 452" />
        <path d="M963 396.500H957.500V402M963 402.500H951.500V452H957.500V402M951.500 408H957.500M951.500 446.500H957.500M954.500 408V446" />
        <path d="M1019.500 386V384.500H1084V386M1021 396.500H1027.500V402M1021 402.500H1032.500V452H1027V402M1027 408H1032.500M1027 446.500H1032.500M1030 408V446" />
        <path d="M1032.500 452A49 49 0 0 0 1076.500 403V396.500H1082M1076.500 402.500H1082" />

        <g stroke="#bd1c2b">
          <path d="M61 404V411M140.500 405V410M209.500 405V410M262.500 405V410M324.500 405V410M373.500 405V431M449.500 410V431" />
          <path d="M568.500 386V413M678.500 386V413M735.500 386V413M790.500 386V413M852.500 386V413M963 386V413M1021.500 386V413M1082 386V413" />
        </g>

        {/* crosshair cursor */}
        <path d="M450.500 374V405.500M450.500 410V442M417 408H448M453 408H484.500" />
        <rect x="448.500" y="405.500" width="4" height="4" stroke="#e2e4e7" />

        {/* UCS axis */}
        <path d="M0 677.500H29" stroke="#d5d8dc" />
        <text x="32" y="677" fill="#d5d8dc" stroke="none" fontSize="16" className="font-light">
          X
        </text>
      </g>
    </svg>
  );
}

function ViewCube() {
  return (
    <div className="absolute right-0 top-[11px] flex w-[84px] flex-col items-end">
      <div className="flex items-center gap-2">
        <button aria-label="Riduci vista" className="h-[5px] w-[10px] border-b-2 border-gray-100" />
        <button aria-label="Ripristina vista" className="-mr-[3px] h-[7px] w-[10px] border-2 border-gray-100" />
      </div>
      <svg
        viewBox="0 0 84 120"
        className="mt-[11px] h-[120px] w-[84px] font-['Noto_Sans',sans-serif]"
        aria-label="ViewCube"
      >
        <circle cx="49" cy="54" r="40" fill="none" stroke="#3e434e" strokeWidth="9" />
        <rect x="30" y="35" width="38" height="38" fill="#b9bbc0" />
        <rect x="38" y="42" width="23" height="24" fill="#aaadb5" />
        <g textAnchor="middle" fill="#b9bcc2" fontSize="15" fontWeight="bold">
          <text x="49" y="17">N</text>
          <text x="49" y="103">S</text>
          <text x="6" y="59">O</text>
        </g>
        <text x="49" y="57" textAnchor="middle" fill="#40444d" fontSize="9" fontWeight="bold">
          ALTO
        </text>
      </svg>
      <button className="mr-4 h-[14px] w-10 rounded-[4px] border border-[#cdced4] bg-[#9b9ea8] pl-[3px] text-left text-[9px] leading-3 text-[#50545e]">
        WCS
      </button>
    </div>
  );
}

function CommandLine() {
  return (
    <div className="absolute bottom-px left-[238px] right-[240px] font-['Liberation_Mono',monospace] text-[11px]">
      <div className="mb-[3px] ml-[55px] flex flex-col items-start gap-[3px] leading-[15px]">
        <span className="bg-[#505257] px-px text-[#aeb0b3]">Comando: CANCELLA</span>
        <span className="bg-[#56585c] px-px text-[#cccdd0]">
          Selezionare oggetti: Specificare angolo opposto: trovato(i) 6
        </span>
        <span className="bg-[#5b5d61] px-px text-[#f2f2f3]">Selezionare oggetti:</span>
      </div>
      <div className="flex h-[22px]">
        <div className="flex w-[50px] items-center bg-[#2a2f3a] pl-1">
          <Icon size="h-[15px] w-[5px]" box="0 0 5 15">
            <path d="M1 0V15M4 0V15" strokeDasharray="1 1" />
          </Icon>
          <button aria-label="Chiudi" className="ml-1">
            <Icon size="h-[9px] w-[9px]" box="0 0 9 9">
              <path d="M1 1L8 8M8 1L1 8" stroke="#d7dade" strokeWidth="1.500" />
            </Icon>
          </button>
          <button aria-label="Personalizza" className="ml-[9px]">
            <Icon size="h-[14px] w-[14px]" box="0 0 14 14">
              <path d="M2 12L8 6" stroke="#c9ccd2" strokeWidth="2.500" strokeLinecap="round" />
              <path d="M10 1Q6 2 8 6Q12 8 13 4L11 5L9 3Z" fill="#c9ccd2" stroke="none" />
            </Icon>
          </button>
        </div>
        <div className="flex flex-1 items-center rounded-r-[2px] bg-[#babbc0] pl-1 pr-1">
          <Icon size="h-[13px] w-[15px]" box="0 0 15 13">
            <rect x="0.500" y="1.500" width="13" height="10" fill="#a5a7ab" stroke="#6a6d73" />
            <path d="M0 3H14" stroke="#5b5e64" strokeWidth="3" />
            <path d="M2 6L4 8L2 10M5 10H8" stroke="#5b5e64" />
          </Icon>
          <svg viewBox="0 0 6 4" className="h-1 w-[6px]">
            <path d="M0 0H6L3 4Z" fill="#4c4f55" />
          </svg>
          <input
            aria-label="Comando"
            placeholder="Digitare un comando"
            className="ml-[6px] min-w-0 flex-1 italic placeholder:text-[#62656b]"
          />
          <svg viewBox="0 0 6 4" className="h-[3px] w-[6px]">
            <path d="M0 4H6L3 0Z" fill="#33363b" />
          </svg>
        </div>
      </div>
    </div>
  );
}

/* ---------- status bar ---------- */

type StatusItem = { name: string; width: string; on?: boolean; icon?: ReactNode; caret?: boolean };

const PERSON = "M8 1L10 7L14 14L8 11L2 14L6 7Z";

const statusItems: StatusItem[] = [
  { name: "Griglia", width: "w-5", icon: <path d="M5 1V15M8.500 1V15M12 1V15M1 4.500H15M1 8H15M1 11.500H15" /> },
  {
    name: "Snap",
    width: "w-[22px]",
    icon: <path d="M3 4H14M3 8H14M3 12H14" strokeWidth="2" strokeDasharray="2 2" />,
  },
  { name: "Opzioni snap", width: "w-4", caret: true },
  { name: "Orto", width: "w-5", on: true, icon: <path d="M2 1V14H15M2 9H7V14" stroke="white" /> },
  {
    name: "Polare",
    width: "w-[22px]",
    icon: <path d="M11 4A5 5 0 1 0 12 11M7 8.500H15M7 8L12 3M11 6L13 8.500L11 11" />,
  },
  { name: "Opzioni polare", width: "w-[13px]", caret: true },
  { name: "Isometrico", width: "w-[22px]", icon: <path d="M7 1V14M2 3L12 13M12 4L8 8" stroke="#858b96" /> },
  { name: "Opzioni isometrico", width: "w-[14px]", caret: true },
  {
    name: "Puntamento",
    width: "w-5",
    on: true,
    icon: (
      <>
        <path d="M13 2L2 13H15" stroke="white" />
        <circle cx="8" cy="7" r="1" fill="white" stroke="white" />
      </>
    ),
  },
  {
    name: "Snap ad oggetto",
    width: "w-5",
    on: true,
    icon: <path d="M5 3H14V14H3V6M1 1H5V5H1Z" stroke="white" />,
  },
  { name: "Opzioni oggetto", width: "w-[17px]", caret: true },
  {
    name: "Visibilità annotazione",
    width: "w-[21px]",
    on: true,
    icon: (
      <>
        <path d={PERSON} fill="white" stroke="none" />
        <circle cx="12.500" cy="4" r="2" stroke="#d8e8f8" />
      </>
    ),
  },
  {
    name: "Scala automatica",
    width: "w-5",
    icon: (
      <>
        <path d={PERSON} fill="#d2d5da" stroke="none" />
        <path d="M14 1L11 5H14L12 8" stroke="#e7e9ec" />
      </>
    ),
  },
  { name: "Annotazione", width: "w-5", icon: <path d={PERSON} fill="#d2d5da" stroke="none" /> },
];

const moreStatusItems: StatusItem[] = [
  {
    name: "Area di lavoro",
    width: "w-[22px]",
    icon: (
      <>
        <circle cx="8" cy="8" r="4" stroke="#dfe2e6" strokeWidth="3" />
        <path d="M8 1V3M8 13V15M1 8H3M13 8H15M3 3L4.500 4.500M11.500 11.500L13 13M13 3L11.500 4.500M3 13L4.500 11.500" stroke="#dfe2e6" strokeWidth="2" />
      </>
    ),
  },
  { name: "Opzioni area di lavoro", width: "w-[13px]", caret: true },
  { name: "Monitor annotazioni", width: "w-[22px]", icon: <path d="M8 2V14M2 8H14" stroke="#dfe2e6" strokeWidth="2" /> },
  {
    name: "Isola oggetti",
    width: "w-6",
    icon: (
      <>
        <rect x="2" y="2" width="5" height="5" />
        <circle cx="12" cy="8" r="2.500" />
        <path d="M7 10L10 15H4Z" />
      </>
    ),
  },
  {
    name: "Prestazioni grafiche",
    width: "w-[22px]",
    icon: (
      <g stroke="none">
        <circle cx="9" cy="7" r="6" fill="#3d80c8" />
        <path d="M1 2H6M3 0V5" stroke="#d3d8de" />
        <rect x="1" y="8" width="6" height="6" fill="#f0c14d" />
        <path d="M7 11L10 14L16 8" fill="none" stroke="#67b84f" strokeWidth="2.500" />
      </g>
    ),
  },
  {
    name: "Schermo intero",
    width: "w-5",
    icon: <path d="M2 3H15V13H2ZM4 11L7 8M4 8V11H7M10 5H13V8" />,
  },
];

function StatusButton({ item }: { item: StatusItem }) {
  return (
    <button
      aria-label={item.name}
      className={clsx(
        "flex h-full shrink-0 items-center justify-center",
        item.width,
        item.on && "border-r border-[#343a48] bg-[#5581b8]",
      )}
    >
      {item.icon && <Icon size="h-[15px] w-[15px]">{item.icon}</Icon>}
      {item.caret && <Caret />}
    </button>
  );
}

function LayoutTab({ label, active = false }: { label: string; active?: boolean }) {
  return (
    <button
      className={clsx(
        "h-4 pl-[9px] pr-[9px] [clip-path:polygon(0_0,100%_0,calc(100%-5px)_100%,5px_100%)]",
        active ? "-ml-4 bg-[#363c49] font-bold text-white" : "bg-[#2a2f3a] text-[#b5bac2]",
      )}
    >
      {label}
    </button>
  );
}

function BottomBar() {
  return (
    <footer className="shrink-0 border-t border-[#3a3f4a] bg-[#22262f] text-[11px] text-[#d9dce1]">
      <div className="flex h-6 justify-between overflow-hidden">
        <div className="flex gap-px leading-4">
          <LayoutTab label="Modello" active />
          <LayoutTab label="Layout1" />
          <LayoutTab label="Layout2" />
          <LayoutTab label="+" />
        </div>
        <div className="flex h-[22px] shrink-0 items-center bg-[#313744]">
          <button className="mr-px h-[18px] w-14 border-r border-[#22262f] font-[Roboto,sans-serif]">MODELLO</button>
          {statusItems.map((item) => (
            <StatusButton key={item.name} item={item} />
          ))}
          <button className="flex w-8 items-center justify-center gap-[3px]">
            1:1
            <Caret />
          </button>
          {moreStatusItems.map((item) => (
            <StatusButton key={item.name} item={item} />
          ))}
        </div>
      </div>
      <div className="h-[3px] border-t border-[#414856] bg-[#2b303b]" />
    </footer>
  );
}

export default function App() {
  return (
    <div className="flex min-h-screen flex-col overflow-hidden bg-[#22262f] font-[Lato,sans-serif] text-[#dcdfe4]">
      <div className="relative flex flex-col">
        <button
          aria-label="Menu applicazione"
          className="absolute left-0 top-[3px] h-[35px] w-[6px] rounded-r-sm bg-gradient-to-b from-[#6d6e70] to-[#a9aaab]"
        />
        <TitleBar />
        <RibbonTabs />
      </div>
      <div className="flex h-[86px] shrink-0 overflow-hidden bg-[#3b4251]">
        <DrawPanel />
        <EditPanel />
        <AnnotationPanel />
        <LayerPanel />
        <BlockPanel />
        <PropertiesPanel />
        <GroupPanel />
        <UtilityPanel />
        <ClipboardPanel />
        <ViewPanel />
      </div>
      <FileTabs />
      <main className="relative min-h-[480px] flex-1 bg-[#21252e]">
        <Drawing />
        <button className="absolute left-0 top-[3px] text-[11px] leading-4">lto][Wireframe 2D]</button>
        <ViewCube />
        <div className="absolute right-0 top-[185px] h-[180px] w-[3px] rounded-l-sm bg-[#555b68]" />
        <CommandLine />
      </main>
      <BottomBar />
    </div>
  );
}
